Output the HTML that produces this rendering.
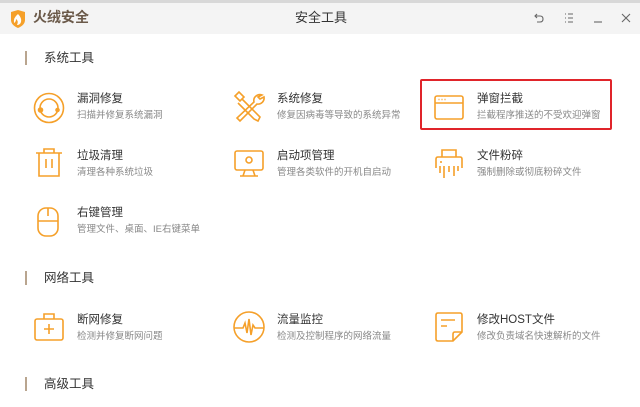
<!DOCTYPE html>
<html><head><meta charset="utf-8"><style>
*{margin:0;padding:0;box-sizing:border-box}
body{width:640px;height:407px;overflow:hidden;background:#fff;font-family:"Liberation Sans","Noto Sans CJK SC",sans-serif;position:relative}
.top{position:absolute;left:0;top:0;width:640px;height:3px;background:#d8d8d8}
.bar{position:absolute;left:0;top:3px;width:640px;height:31px;background:#f4f4f4}
.abs{position:absolute}
.sec{position:absolute;left:44px;font-size:12.5px;color:#333;line-height:14px}
.sec:before{content:"";position:absolute;left:-19px;top:0;width:2px;height:14px;background:#b9a58f}
.t{position:absolute;font-size:11.5px;color:#333;line-height:13px;white-space:nowrap}
.s{position:absolute;font-size:9.5px;color:#888;line-height:11px;white-space:nowrap}
svg.i{position:absolute;fill:none;stroke:#f5a02a;stroke-width:1.6}
</style></head><body>
<div class="top"></div><div class="bar"></div>
<svg class="abs" style="left:10px;top:10px" width="16" height="18" viewBox="0 0 16 18"><path d="M1 2 L8 0 L15 2 L15 10 Q15 15 8 18 Q1 15 1 10Z" fill="#f5a02a"/><path d="M8 4 Q12 8 11 12 Q10 15 7 15 Q9 11 6 9 Q6 12 4 13 Q3 8 8 4Z" fill="#fff"/></svg>
<div class="abs" style="left:33px;top:9px;font-size:14px;font-weight:bold;color:#6b5a4a;line-height:16px">火绒安全</div>
<div class="abs" style="left:295px;top:10px;font-size:13px;color:#333;line-height:15px">安全工具</div>
<svg class="abs" style="left:533px;top:11px" width="100" height="14" viewBox="0 0 100 14" fill="none" stroke="#666" stroke-width="1.1"><path d="M4 3 L2 5 L4 7 M2 5 H7 Q10 5 10 8 Q10 11 7 11 H4"/><path d="M32 3h1M32 7h1M32 11h1M35 3h5M35 7h5M35 11h5"/><path d="M61 11h8"/><path d="M89 3l8 8M97 3l-8 8"/></svg>

<div class="sec" style="top:51px">系统工具</div>
<div class="sec" style="top:271px">网络工具</div>
<div class="sec" style="top:377px">高级工具</div>

<div class="abs" style="left:420px;top:79px;width:192px;height:51px;border:2px solid #e0242a;border-radius:2px"></div>

<svg class="i" style="left:33px;top:92px" width="32" height="32" viewBox="0 0 32 32"><circle cx="16" cy="16" r="14.5"/><circle cx="16" cy="16" r="9"/><circle cx="7.5" cy="18" r="2" fill="#f5a02a"/><circle cx="24.5" cy="18" r="1.5" fill="#f5a02a"/></svg>
<div class="t" style="left:77px;top:93px">漏洞修复</div><div class="s" style="left:77px;top:110px">扫描并修复系统漏洞</div>
<svg class="i" style="left:232px;top:90px" width="34" height="34" viewBox="0 0 34 34"><path d="M3 6 L7 2 L12 7 L8 11Z M10 9 L28 27 L26 31 L22 29 L6 13"/><path d="M30 5 A6 6 0 0 0 22 12 L5 28 L8 31 L25 14 A6 6 0 0 0 32 7 L28 9 L26 7Z"/></svg>
<div class="t" style="left:277px;top:93px">系统修复</div><div class="s" style="left:277px;top:110px">修复因病毒等导致的系统异常</div>
<svg class="i" style="left:434px;top:95px" width="30" height="25" viewBox="0 0 30 25"><rect x="1" y="1" width="28" height="23" rx="2"/><path d="M1 8H29"/><path d="M4.5 4.5h1M7.5 4.5h1M10.5 4.5h1"/></svg>
<div class="t" style="left:477px;top:93px">弹窗拦截</div><div class="s" style="left:477px;top:110px">拦截程序推送的不受欢迎弹窗</div>

<svg class="i" style="left:35px;top:148px" width="28" height="30" viewBox="0 0 28 30"><path d="M1 5H27M9 5V1H19V5M4 5V28H24V5M11 11V20M17 11V20"/></svg>
<div class="t" style="left:77px;top:150px">垃圾清理</div><div class="s" style="left:77px;top:167px">清理各种系统垃圾</div>
<svg class="i" style="left:234px;top:150px" width="30" height="28" viewBox="0 0 30 28"><rect x="1" y="1" width="28" height="19" rx="2"/><circle cx="15" cy="10" r="3"/><path d="M11 20 L9 26 H21 L19 20 M6 26H24"/></svg>
<div class="t" style="left:277px;top:150px">启动项管理</div><div class="s" style="left:277px;top:167px">管理各类软件的开机自启动</div>
<svg class="i" style="left:434px;top:149px" width="30" height="30" viewBox="0 0 30 30"><path d="M8 8V1H22V8"/><path d="M2 19V10Q2 8 4 8H26Q28 8 28 10V19"/><path d="M6 13h2"/><path d="M6 17V24M10 17V29M15 17V23M20 17V27M24 17V22"/></svg>
<div class="t" style="left:477px;top:150px">文件粉碎</div><div class="s" style="left:477px;top:167px">强制删除或彻底粉碎文件</div>

<svg class="i" style="left:37px;top:207px" width="22" height="30" viewBox="0 0 22 30"><rect x="1" y="1" width="20" height="28" rx="8"/><path d="M1 14H21M11 1V9"/></svg>
<div class="t" style="left:77px;top:207px">右键管理</div><div class="s" style="left:77px;top:224px">管理文件、桌面、IE右键菜单</div>

<svg class="i" style="left:34px;top:313px" width="30" height="28" viewBox="0 0 30 28"><path d="M10 6V1H20V6"/><rect x="1" y="6" width="28" height="21" rx="2"/><path d="M15 11V21M10 16H20"/></svg>
<div class="t" style="left:77px;top:314px">断网修复</div><div class="s" style="left:77px;top:331px">检测并修复断网问题</div>
<svg class="i" style="left:233px;top:311px" width="32" height="32" viewBox="0 0 32 32"><circle cx="16" cy="16" r="15"/><path d="M1 17H10L12 12L14 22L16 8L18 24L20 14L22 17H31"/></svg>
<div class="t" style="left:277px;top:314px">流量监控</div><div class="s" style="left:277px;top:331px">检测及控制程序的网络流量</div>
<svg class="i" style="left:435px;top:312px" width="28" height="30" viewBox="0 0 28 30"><path d="M18 29H3Q1 29 1 27V3Q1 1 3 1H25Q27 1 27 3V20Z"/><path d="M18 29V22Q18 20 20 20H27"/><path d="M6 8H20M6 14H12"/></svg>
<div class="t" style="left:477px;top:314px">修改HOST文件</div><div class="s" style="left:477px;top:331px">修改负责域名快速解析的文件</div>
</body></html>
